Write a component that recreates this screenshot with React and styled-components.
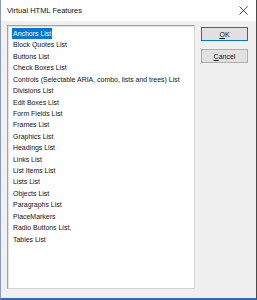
import React, {useState} from 'react';
import styled, {createGlobalStyle} from 'styled-components';

const GlobalStyle = createGlobalStyle`
  html, body {
    margin: 0;
    padding: 0;
    width: 257px;
    height: 300px;
    overflow: hidden;
    background: #f0f0f0;
  }
  #root {
    width: 100%;
    height: 100%;
  }
`;

const Window = styled.div`
  box-sizing: border-box;
  width: 257px;
  height: 300px;
  display: flex;
  flex-direction: column;
  background: #f0f0f0;
  border-left: 1px solid #8c9cb4;
  border-right: 1px solid #4a4a4a;
  border-bottom: 2px solid #2b6bc4;
  font-family: "Liberation Sans", Arial, sans-serif;
  color: #000;
`;

const TitleBar = styled.div`
  height: 21px;
  flex: none;
  display: flex;
  align-items: center;
  justify-content: space-between;
  background: #fff;
  padding: 0 6px 0 6px;
`;

const Title = styled.span`
  font-size: 7.5px;
  color: #111;
`;

const CloseIcon = styled.svg`
  width: 9px;
  height: 9px;
  margin-right: 2px;
`;

const Body = styled.div`
  flex: 1;
  display: flex;
  padding: 4px 7px 10px 6px;
  gap: 6px;
  min-height: 0;
`;

const ListBox = styled.ul`
  box-sizing: border-box;
  width: 188px;
  height: 264px;
  margin: 0;
  padding: 2px 4px;
  list-style: none;
  background: #fff;
  border: 1px solid;
  border-color: #a0a0a0 #d4d4d4 #d4d4d4 #a0a0a0;
  box-shadow: inset 1px 1px 0 #e3e3e3;
  overflow: hidden;
`;

const Item = styled.li`
  height: 11.43px;
  line-height: 11px;
  font-size: 6.95px;
  white-space: nowrap;
  color: #111;
`;

const ItemText = styled.span`
  display: inline-block;
  padding: 0 1px;
  background: ${p => (p.$selected ? '#0078d7' : 'transparent')};
  color: ${p => (p.$selected ? '#fff' : '#111')};
`;

const Buttons = styled.div`
  display: flex;
  flex-direction: column;
  gap: 8px;
  padding-top: 2px;
`;

const Button = styled.button`
  box-sizing: border-box;
  width: 47px;
  height: 14px;
  padding: 0;
  background: #e1e1e1;
  border: 1px solid ${p => (p.$primary ? '#0078d7' : '#adadad')};
  font-family: "Liberation Sans", Arial, sans-serif;
  font-size: 7px;
  color: #111;
  display: flex;
  align-items: center;
  justify-content: center;
  u {
    text-decoration-thickness: 0.5px;
    text-underline-offset: 1px;
  }
`;

const features = [
  'Anchors List',
  'Block Quotes List',
  'Buttons List',
  'Check Boxes List',
  'Controls (Selectable ARIA, combo, lists and trees) List',
  'Divisions List',
  'Edit Boxes List',
  'Form Fields List',
  'Frames List',
  'Graphics List',
  'Headings List',
  'Links List',
  'List Items List',
  'Lists List',
  'Objects List',
  'Paragraphs List',
  'PlaceMarkers',
  'Radio Buttons List,',
  'Tables List',
];

function App() {
  const [selected, setSelected] = useState(0);

  return (
    <Window>
      <GlobalStyle />
      <TitleBar>
        <Title>Virtual HTML Features</Title>
        <CloseIcon viewBox="0 0 10 10">
          <path d="M0.5 0.5 L9.5 9.5 M9.5 0.5 L0.5 9.5" stroke="#222" strokeWidth="0.9" fill="none" />
        </CloseIcon>
      </TitleBar>
      <Body>
        <ListBox>
          {features.map((f, i) => (
            <Item key={f} onClick={() => setSelected(i)}>
              <ItemText $selected={i === selected}>{f}</ItemText>
            </Item>
          ))}
        </ListBox>
        <Buttons>
          <Button $primary><span><u>O</u>K</span></Button>
          <Button><span><u>C</u>ancel</span></Button>
        </Buttons>
      </Body>
    </Window>
  );
}

export default App;
